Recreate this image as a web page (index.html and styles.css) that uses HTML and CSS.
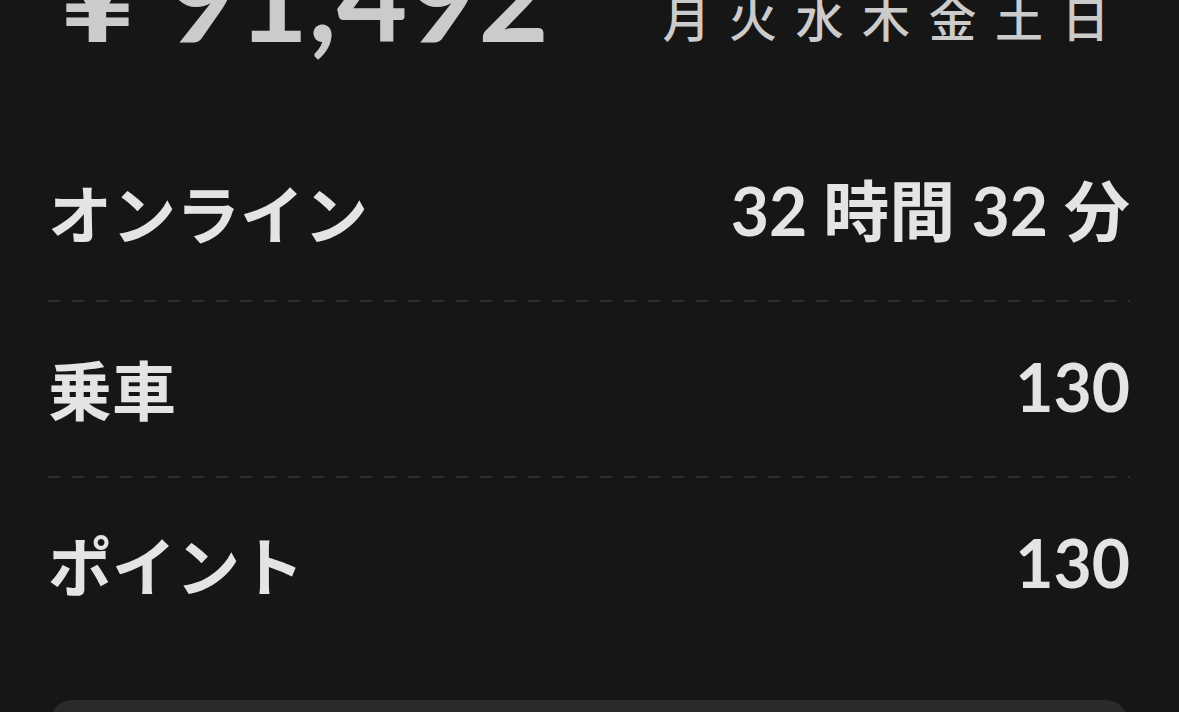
FILE: index.html
```html
<!DOCTYPE html>
<html lang="ja">
<head>
<meta charset="utf-8">
<link rel="stylesheet" href="styles.css">
</head>
<body>
<div class="page">
  <div class="top">
    <div class="amount"><span class="yen">¥</span>91,492</div>
    <div class="days">月火水木金土日</div>
  </div>
  <div class="stats">
    <div class="row">
      <span class="label">オンライン</span>
      <span class="value">32 時間 32 分</span>
    </div>
    <div class="row">
      <span class="label">乗車</span>
      <span class="value">130</span>
    </div>
    <div class="row last">
      <span class="label">ポイント</span>
      <span class="value">130</span>
    </div>
  </div>
  <div class="card"></div>
</div>
</body>
</html>
```

FILE: styles.css
```css
html, body {
  margin: 0;
  padding: 0;
  background: #161616;
  height: 100%;
  overflow: hidden;
}
.page {
  padding: 0 49px 0 48px;
  font-family: "Lato", "Noto Sans CJK JP", sans-serif;
}
.top {
  height: 60px;
  display: flex;
  align-items: flex-end;
  justify-content: space-between;
  overflow: hidden;
  color: #cbcbcb;
}
.amount {
  font-size: 122px;
  font-weight: 700;
  line-height: 1;
  margin-left: 14px;
  margin-bottom: 4px;
  white-space: nowrap;
}
.yen {
  display: inline-block;
  margin-right: 34px;
  transform: scaleX(1.15);
}
.days {
  font-family: "Noto Sans CJK JP", sans-serif;
  font-size: 48px;
  font-weight: 500;
  letter-spacing: 18.5px;
  line-height: 1;
  margin-right: 2px;
  margin-bottom: 20px;
  white-space: nowrap;
}
.stats {
  margin-top: 66px;
}
.row {
  height: 170px;
  padding-bottom: 6px;
  display: flex;
  align-items: center;
  justify-content: space-between;
  color: #e4e4e4;
  font-weight: 700;
  background-image: linear-gradient(to right, #2e2e2e 50%, transparent 50%);
  background-size: 24px 2px;
  background-repeat: repeat-x;
  background-position: 0 100%;
}
.row.last {
  background: none;
}
.label {
  font-family: "Noto Sans CJK JP", sans-serif;
  font-size: 64px;
  font-weight: 700;
  line-height: 1;
}
.value {
  font-size: 66px;
  line-height: 1;
}
.card {
  margin-top: 46px;
  height: 120px;
  margin-left: 2px;
  margin-right: 2px;
  background: #2a2a2a;
  border-radius: 22px;
}
```
